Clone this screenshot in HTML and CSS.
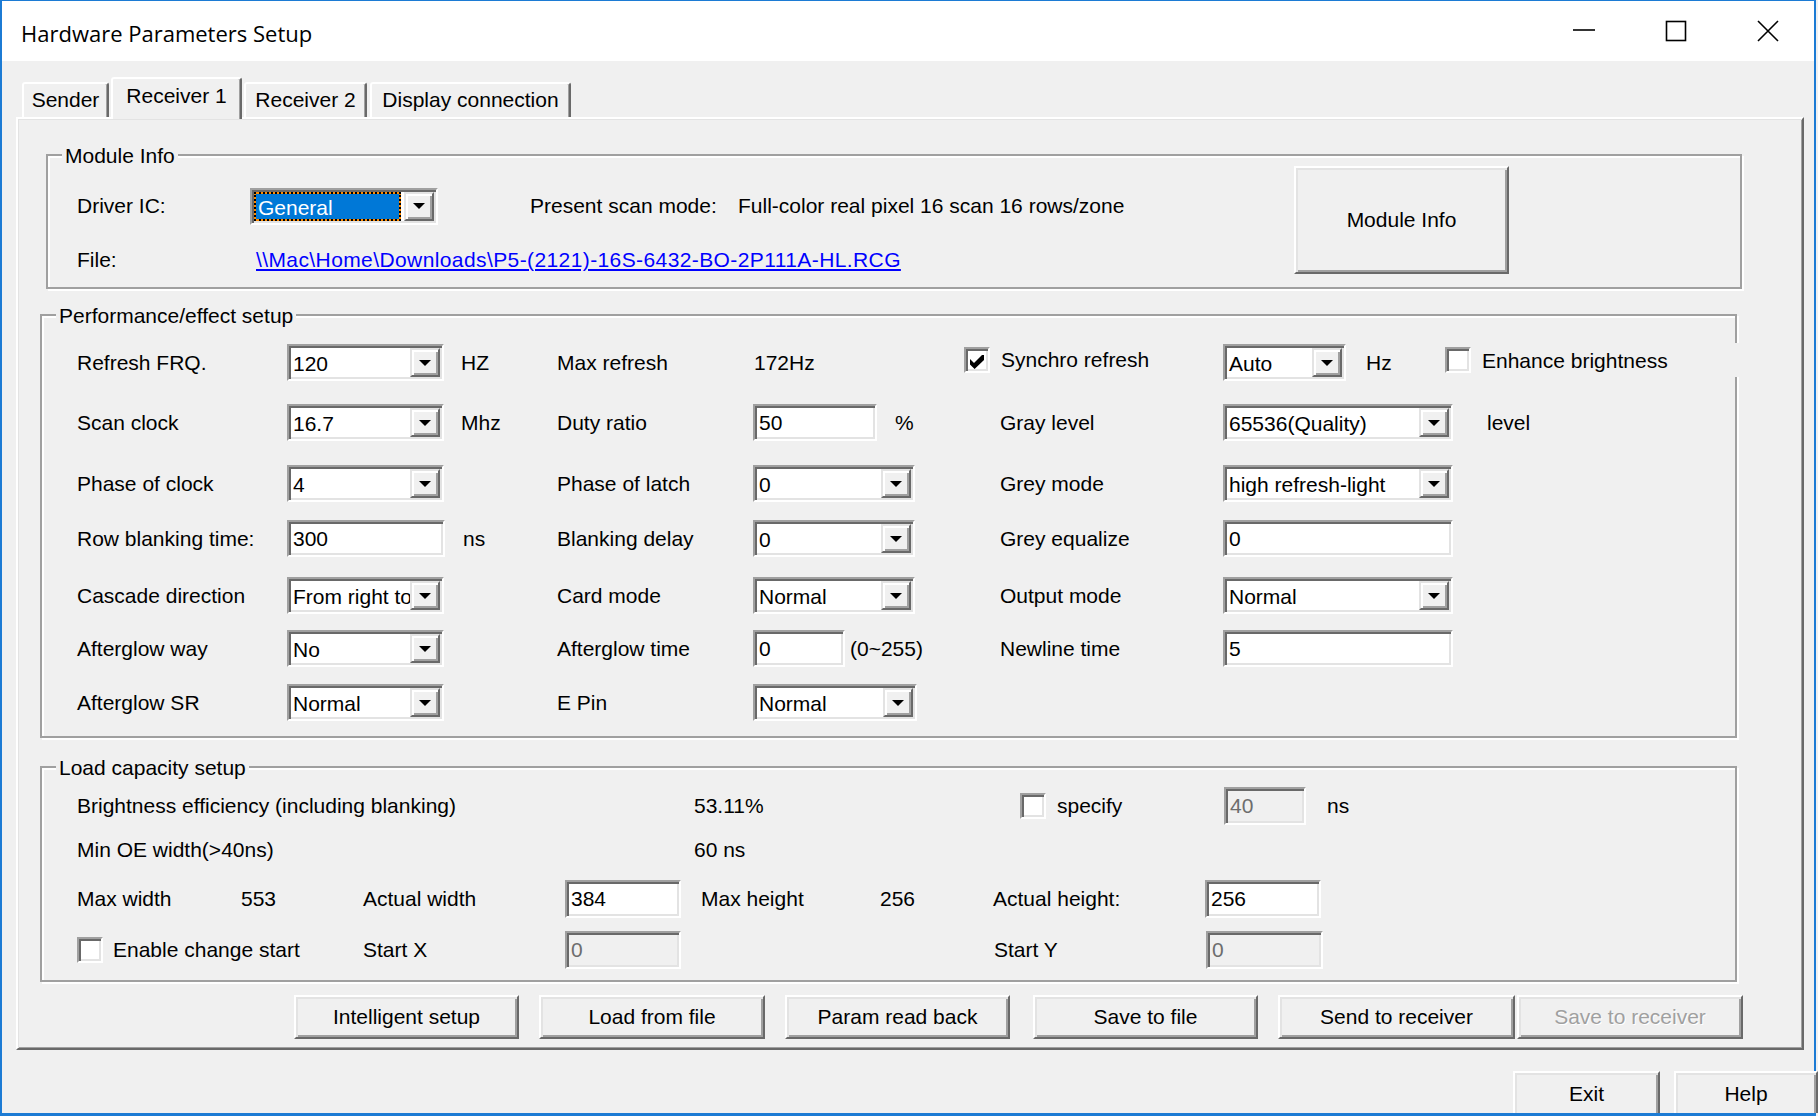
FILE: index.html
```html
<!DOCTYPE html>
<html lang="en">
<head>
<meta charset="utf-8">
<title>Hardware Parameters Setup</title>
<link rel="stylesheet" href="styles.css">
</head>
<body>
<div class="window">
  <div class="titlebar">
    <div class="title">Hardware Parameters Setup</div>
    <div class="caps">
      <div class="cap"><svg width="22" height="22" viewBox="0 0 22 22"><line x1="0" y1="10" x2="22" y2="10" stroke="#000" stroke-width="1.6"/></svg></div>
      <div class="cap"><svg width="22" height="22" viewBox="0 0 22 22"><rect x="1.5" y="1.5" width="19" height="19" fill="none" stroke="#000" stroke-width="1.6"/></svg></div>
      <div class="cap"><svg width="22" height="22" viewBox="0 0 22 22"><path d="M1 1L21 21M21 1L1 21" stroke="#000" stroke-width="1.6" fill="none"/></svg></div>
    </div>
  </div>

  <div class="tabs">
    <div class="tab t-sender">Sender</div>
    <div class="tab active t-r1">Receiver 1</div>
    <div class="tab t-r2">Receiver 2</div>
    <div class="tab t-dc">Display connection</div>
  </div>

  <div class="panel">
    <div class="group g-module">
      <div class="gtitle">Module Info</div>
      <div class="module-body">
        <div class="module-left">
          <div class="mrow">
            <span class="w-driver">Driver IC:</span>
            <div class="combo c-driver"><span class="cv"><span class="sel">General</span></span><span class="dd"><i></i></span></div>
            <span class="w-scan">Present scan mode:</span>
            <span>Full-color real pixel 16 scan 16 rows/zone</span>
          </div>
          <div class="mrow r2">
            <span class="w-file">File:</span>
            <span class="link">\\Mac\Home\Downloads\P5-(2121)-16S-6432-BO-2P111A-HL.RCG</span>
          </div>
        </div>
        <div class="btn b-module">Module Info</div>
      </div>
    </div>

    <div class="group g-perf">
      <div class="gtitle">Performance/effect setup</div>
      <div class="pgrid">
        <!-- row 1 -->
        <div class="cell">Refresh FRQ.</div>
        <div class="cell"><div class="combo w157"><span class="cv">120</span><span class="dd"><i></i></span></div></div>
        <div class="cell unit">HZ</div>
        <div class="cell">Max refresh</div>
        <div class="cell val">172Hz</div>
        <div class="cell up3"><span class="cb"><svg width="18" height="18" viewBox="0 0 9 9"><polygon points="1,4 3,6 7,2 8,2 8,4.5 3.3,9 1,6.8" fill="#000"/></svg></span><span class="cbl">Synchro refresh</span></div>
        <div class="cell"><div class="combo w123"><span class="cv">Auto</span><span class="dd"><i></i></span></div><span class="hz">Hz</span><div class="enh"><span class="cb"></span><span class="cbl">Enhance brightness</span></div></div>
        <!-- row 2 -->
        <div class="cell">Scan clock</div>
        <div class="cell"><div class="combo w157"><span class="cv">16.7</span><span class="dd"><i></i></span></div></div>
        <div class="cell unit">Mhz</div>
        <div class="cell">Duty ratio</div>
        <div class="cell"><span class="tb w124">50</span><span class="pct">%</span></div>
        <div class="cell pad36">Gray level</div>
        <div class="cell"><div class="combo w230"><span class="cv">65536(Quality)</span><span class="dd"><i></i></span></div><span class="lvl">level</span></div>
        <!-- row 3 -->
        <div class="cell">Phase of clock</div>
        <div class="cell"><div class="combo w157"><span class="cv">4</span><span class="dd"><i></i></span></div></div>
        <div class="cell"></div>
        <div class="cell">Phase of latch</div>
        <div class="cell"><div class="combo w162"><span class="cv">0</span><span class="dd"><i></i></span></div></div>
        <div class="cell pad36">Grey mode</div>
        <div class="cell"><div class="combo w230"><span class="cv">high refresh-light</span><span class="dd"><i></i></span></div></div>
        <!-- row 4 -->
        <div class="cell">Row blanking time:</div>
        <div class="cell"><span class="tb w158">300</span></div>
        <div class="cell unit ns">ns</div>
        <div class="cell">Blanking delay</div>
        <div class="cell"><div class="combo w162"><span class="cv">0</span><span class="dd"><i></i></span></div></div>
        <div class="cell pad36">Grey equalize</div>
        <div class="cell"><span class="tb w230">0</span></div>
        <!-- row 5 -->
        <div class="cell">Cascade direction</div>
        <div class="cell"><div class="combo w157"><span class="cv">From right to left</span><span class="dd"><i></i></span></div></div>
        <div class="cell"></div>
        <div class="cell">Card mode</div>
        <div class="cell"><div class="combo w162"><span class="cv">Normal</span><span class="dd"><i></i></span></div></div>
        <div class="cell pad36">Output mode</div>
        <div class="cell"><div class="combo w230"><span class="cv">Normal</span><span class="dd"><i></i></span></div></div>
        <!-- row 6 -->
        <div class="cell">Afterglow way</div>
        <div class="cell"><div class="combo w157"><span class="cv">No</span><span class="dd"><i></i></span></div></div>
        <div class="cell"></div>
        <div class="cell">Afterglow time</div>
        <div class="cell"><span class="tb w92">0</span><span class="rng">(0~255)</span></div>
        <div class="cell pad36">Newline time</div>
        <div class="cell"><span class="tb w230">5</span></div>
        <!-- row 7 -->
        <div class="cell">Afterglow SR</div>
        <div class="cell"><div class="combo w157"><span class="cv">Normal</span><span class="dd"><i></i></span></div></div>
        <div class="cell"></div>
        <div class="cell">E Pin</div>
        <div class="cell"><div class="combo w164"><span class="cv">Normal</span><span class="dd"><i></i></span></div></div>
        <div class="cell"></div>
        <div class="cell"></div>
      </div>
    </div>

    <div class="group g-load">
      <div class="gtitle">Load capacity setup</div>
      <div class="lrow ra">
        <span class="x617">Brightness efficiency (including blanking)</span>
        <span class="x326">53.11%</span>
        <span class="chk x204"><span class="cb"></span><span class="cbl">specify</span></span>
        <span class="tb h38 dis w82">40</span>
        <span class="ns2">ns</span>
      </div>
      <div class="lrow rb">
        <span class="x617">Min OE width(&gt;40ns)</span>
        <span>60 ns</span>
      </div>
      <div class="lrow rc">
        <span class="x164">Max width</span>
        <span class="x122">553</span>
        <span class="x202">Actual width</span>
        <span class="tb h38 w116">384</span>
        <span class="x179 ml20">Max height</span>
        <span class="x113">256</span>
        <span class="x212">Actual height:</span>
        <span class="tb h38 w116">256</span>
      </div>
      <div class="lrow rd">
        <span class="chk x286"><span class="cb"></span><span class="cbl">Enable change start</span></span>
        <span class="x202">Start X</span>
        <span class="tb h38 dis w116">0</span>
        <span class="x313"></span>
        <span class="x212">Start Y</span>
        <span class="tb h38 dis w117">0</span>
      </div>
    </div>

    <div class="btnrow">
      <div class="btn bw225">Intelligent setup</div>
      <div class="btn bw226 ml20">Load from file</div>
      <div class="btn bw225 ml20">Param read back</div>
      <div class="btn bw225 ml23">Save to file</div>
      <div class="btn bw237 ml20">Send to receiver</div>
      <div class="btn bw226 ml2 disabled">Save to receiver</div>
    </div>
  </div>

  <div class="bottomrow">
    <div class="btn cut bw147">Exit</div>
    <div class="btn cut bw144 ml14">Help</div>
  </div>
</div>
</body>
</html>
```

FILE: styles.css
```css
* { box-sizing: border-box; }
html, body { margin: 0; padding: 0; }
body {
  width: 1818px;
  height: 1116px;
  overflow: hidden;
  background: #f0f0f0;
  font-family: "Liberation Sans", Arial, sans-serif;
  font-size: 21px;
  color: #000;
}

.window {
  width: 1816px;
  height: 1116px;
  border-style: solid;
  border-color: #1c7bd4;
  border-width: 1px 2px 3px 2px;
  background: #f0f0f0;
}

/* title bar */
.titlebar {
  height: 60px;
  background: #fff;
  display: flex;
  align-items: center;
  justify-content: space-between;
}
.title {
  font-family: "Open Sans", "Noto Sans", sans-serif;
  font-size: 22px;
  padding-left: 19px;
  padding-top: 3px;
}
.caps { display: flex; height: 60px; }
.cap {
  width: 92px;
  height: 60px;
  display: flex;
  align-items: center;
  justify-content: center;
  padding-bottom: 1px;
}
.cap svg { display: block; }

/* tabs */
.tabs {
  display: flex;
  align-items: flex-end;
  height: 40px;
  margin-top: 16px;
  padding-left: 20px;
}
.tab {
  flex: none;
  height: 35px;
  line-height: 32px;
  text-align: center;
  white-space: nowrap;
  background: #f0f0f0;
  border-style: solid;
  border-width: 2px 2px 0 2px;
  border-color: #fff #696969 transparent #fff;
  box-shadow: inset -1px 0 0 #a0a0a0;
  border-radius: 3px 3px 0 0;
}
.t-sender { width: 87px; }
.t-r1 {
  width: 131px;
  height: 42px;
  line-height: 33px;
  margin-left: 2px;
  margin-bottom: -2px;
  position: relative;
  z-index: 1;
}
.t-r2 { width: 123px; margin-left: 2px; }
.t-dc { width: 201px; margin-left: 3px; }

/* tab page */
.panel {
  margin-left: 14px;
  width: 1788px;
  height: 933px;
  border: 2px solid;
  border-color: #fff #696969 #696969 #fff;
  box-shadow: inset 1px 1px 0 #e3e3e3, inset -1px -1px 0 #a0a0a0;
}

/* group boxes */
.group {
  border: 2px solid #a0a0a0;
  box-shadow: 2px 2px 0 #fff, inset 2px 2px 0 #fff;
}
.gtitle {
  width: max-content;
  height: 24px;
  line-height: 27px;
  margin: -14px 0 0 14px;
  padding: 0 3px;
  background: #f0f0f0;
}

.g-module { margin: 35px 0 0 28px; width: 1696px; }
.module-body { display: flex; align-items: flex-start; }
.module-left { width: 1246px; flex: none; padding: 21px 0 8px 29px; }
.mrow {
  display: flex;
  align-items: center;
  height: 38px;
  line-height: 40px;
  white-space: nowrap;
}
.mrow > * { flex: none; }
.mrow.r2 { margin-top: 16px; }
.w-driver { width: 173px; }
.w-scan { width: 208px; margin-left: 92px; }
.w-file { width: 179px; }
.link { color: #0000ff; text-decoration: underline; letter-spacing: 0.4px; }
.c-driver { width: 188px; height: 38px; line-height: 29px; }
.c-driver .cv { padding: 0 3px 0 0; }
.sel {
  display: block;
  height: 100%;
  border: 2px dotted #000;
  background: linear-gradient(#0078d7, #0078d7) padding-box, #ff8a00;
  color: #fff;
  line-height: 28px;
  padding-left: 2px;
}

.g-perf { margin: 25px 0 0 22px; width: 1697px; padding-bottom: 15px; }
.pgrid {
  display: grid;
  grid-template-columns: 210px 158px 112px 196px 211px 259px auto;
  grid-template-rows: 60px 61px 55px 57px 53px 54px 37px;
  margin: 18px 0 0 35px;
}
.cell {
  display: flex;
  align-items: center;
  height: 37px;
  line-height: 39px;
  white-space: nowrap;
}
.cell > * { flex: none; }
.unit { padding-left: 16px; }
.unit.ns { padding-left: 18px; }
.val { padding-left: 1px; }
.pad36 { padding-left: 36px; }
.up3 { margin-top: -3px; }
.hz { width: 79px; margin-left: 20px; }
.pct { margin-left: 18px; }
.rng { margin-left: 5px; }
.lvl { margin-left: 34px; }
.enh {
  display: flex;
  align-items: center;
  width: 296px;
  height: 34px;
  align-self: flex-start;
  margin-top: -1px;
  background: #f0f0f0;
}

/* controls */
.combo {
  display: flex;
  height: 37px;
  background: #fff;
  border: 2px solid;
  border-color: #a0a0a0 #fff #fff #a0a0a0;
  box-shadow: inset 2px 2px 0 #696969, inset -2px -2px 0 #e3e3e3;
  padding: 2px;
}
.cv {
  flex: 1;
  min-width: 0;
  overflow: hidden;
  white-space: nowrap;
  padding-left: 2px;
  line-height: 31px;
}
.dd {
  width: 30px;
  flex: none;
  background: #f0f0f0;
  border: 2px solid;
  border-color: #e3e3e3 #696969 #696969 #e3e3e3;
  box-shadow: inset 2px 2px 0 #fff, inset -2px -2px 0 #a0a0a0;
  display: flex;
  align-items: center;
  justify-content: center;
}
.dd i {
  display: block;
  width: 0;
  height: 0;
  border-left: 6px solid transparent;
  border-right: 6px solid transparent;
  border-top: 6px solid #000;
}
.tb {
  display: block;
  height: 37px;
  background: #fff;
  border: 2px solid;
  border-color: #a0a0a0 #fff #fff #a0a0a0;
  box-shadow: inset 2px 2px 0 #696969, inset -2px -2px 0 #e3e3e3;
  padding: 2px 4px;
  line-height: 29px;
  white-space: nowrap;
  overflow: hidden;
}
.tb.h38 { height: 38px; line-height: 30px; }
.tb.dis { background: #f0f0f0; color: #6d6d6d; }
.cb {
  width: 26px;
  height: 26px;
  flex: none;
  background: #fff;
  border: 2px solid;
  border-color: #a0a0a0 #fff #fff #a0a0a0;
  box-shadow: inset 2px 2px 0 #696969, inset -2px -2px 0 #e3e3e3;
  display: flex;
  align-items: center;
  justify-content: center;
}
.cb svg { display: block; }
.cbl { margin-left: 11px; }
.chk { display: flex; align-items: center; }

.w82 { width: 82px; }
.w92 { width: 92px; }
.w116 { width: 116px; }
.w117 { width: 117px; }
.w123 { width: 123px; }
.w124 { width: 124px; }
.w157 { width: 157px; }
.w158 { width: 158px; }
.w162 { width: 162px; }
.w164 { width: 164px; }
.w230 { width: 230px; }

/* load capacity */
.g-load { margin: 28px 0 0 22px; width: 1697px; padding-bottom: 11px; }
.lrow {
  display: flex;
  align-items: center;
  height: 38px;
  line-height: 40px;
  margin-left: 35px;
  white-space: nowrap;
}
.lrow > * { flex: none; }
.ra { margin-top: 9px; }
.rb { margin-top: 6px; }
.rc { margin-top: 11px; }
.rd { margin-top: 13px; }
.x113 { width: 113px; }
.x122 { width: 122px; }
.x164 { width: 164px; }
.x179 { width: 179px; }
.x202 { width: 202px; }
.x204 { width: 204px; }
.x212 { width: 212px; }
.x286 { width: 286px; }
.x313 { width: 313px; }
.x326 { width: 326px; }
.x617 { width: 617px; }
.ns2 { margin-left: 21px; }
.rd .cbl { margin-left: 10px; }

/* buttons */
.btn {
  flex: none;
  display: flex;
  align-items: center;
  justify-content: center;
  white-space: nowrap;
  background: #f0f0f0;
  border: 2px solid;
  border-color: #fff #696969 #696969 #fff;
  box-shadow: inset 2px 2px 0 #e3e3e3, inset -2px -2px 0 #a0a0a0;
}
.b-module { width: 215px; height: 108px; }
.btnrow {
  display: flex;
  height: 44px;
  margin: 13px 0 0 276px;
}
.bw144 { width: 144px; }
.bw147 { width: 147px; }
.bw225 { width: 225px; }
.bw226 { width: 226px; }
.bw237 { width: 237px; }
.ml2 { margin-left: 2px; }
.ml14 { margin-left: 14px; }
.ml20 { margin-left: 20px; }
.ml23 { margin-left: 23px; }
.disabled { color: #a0a0a0; text-shadow: 1px 1px 0 #fff; }

.bottomrow {
  display: flex;
  align-items: flex-start;
  height: 42px;
  margin: 21px -4px 0 0;
  padding-left: 1511px;
  overflow: hidden;
}
.cut { height: 50px; padding-bottom: 4px; }
```
